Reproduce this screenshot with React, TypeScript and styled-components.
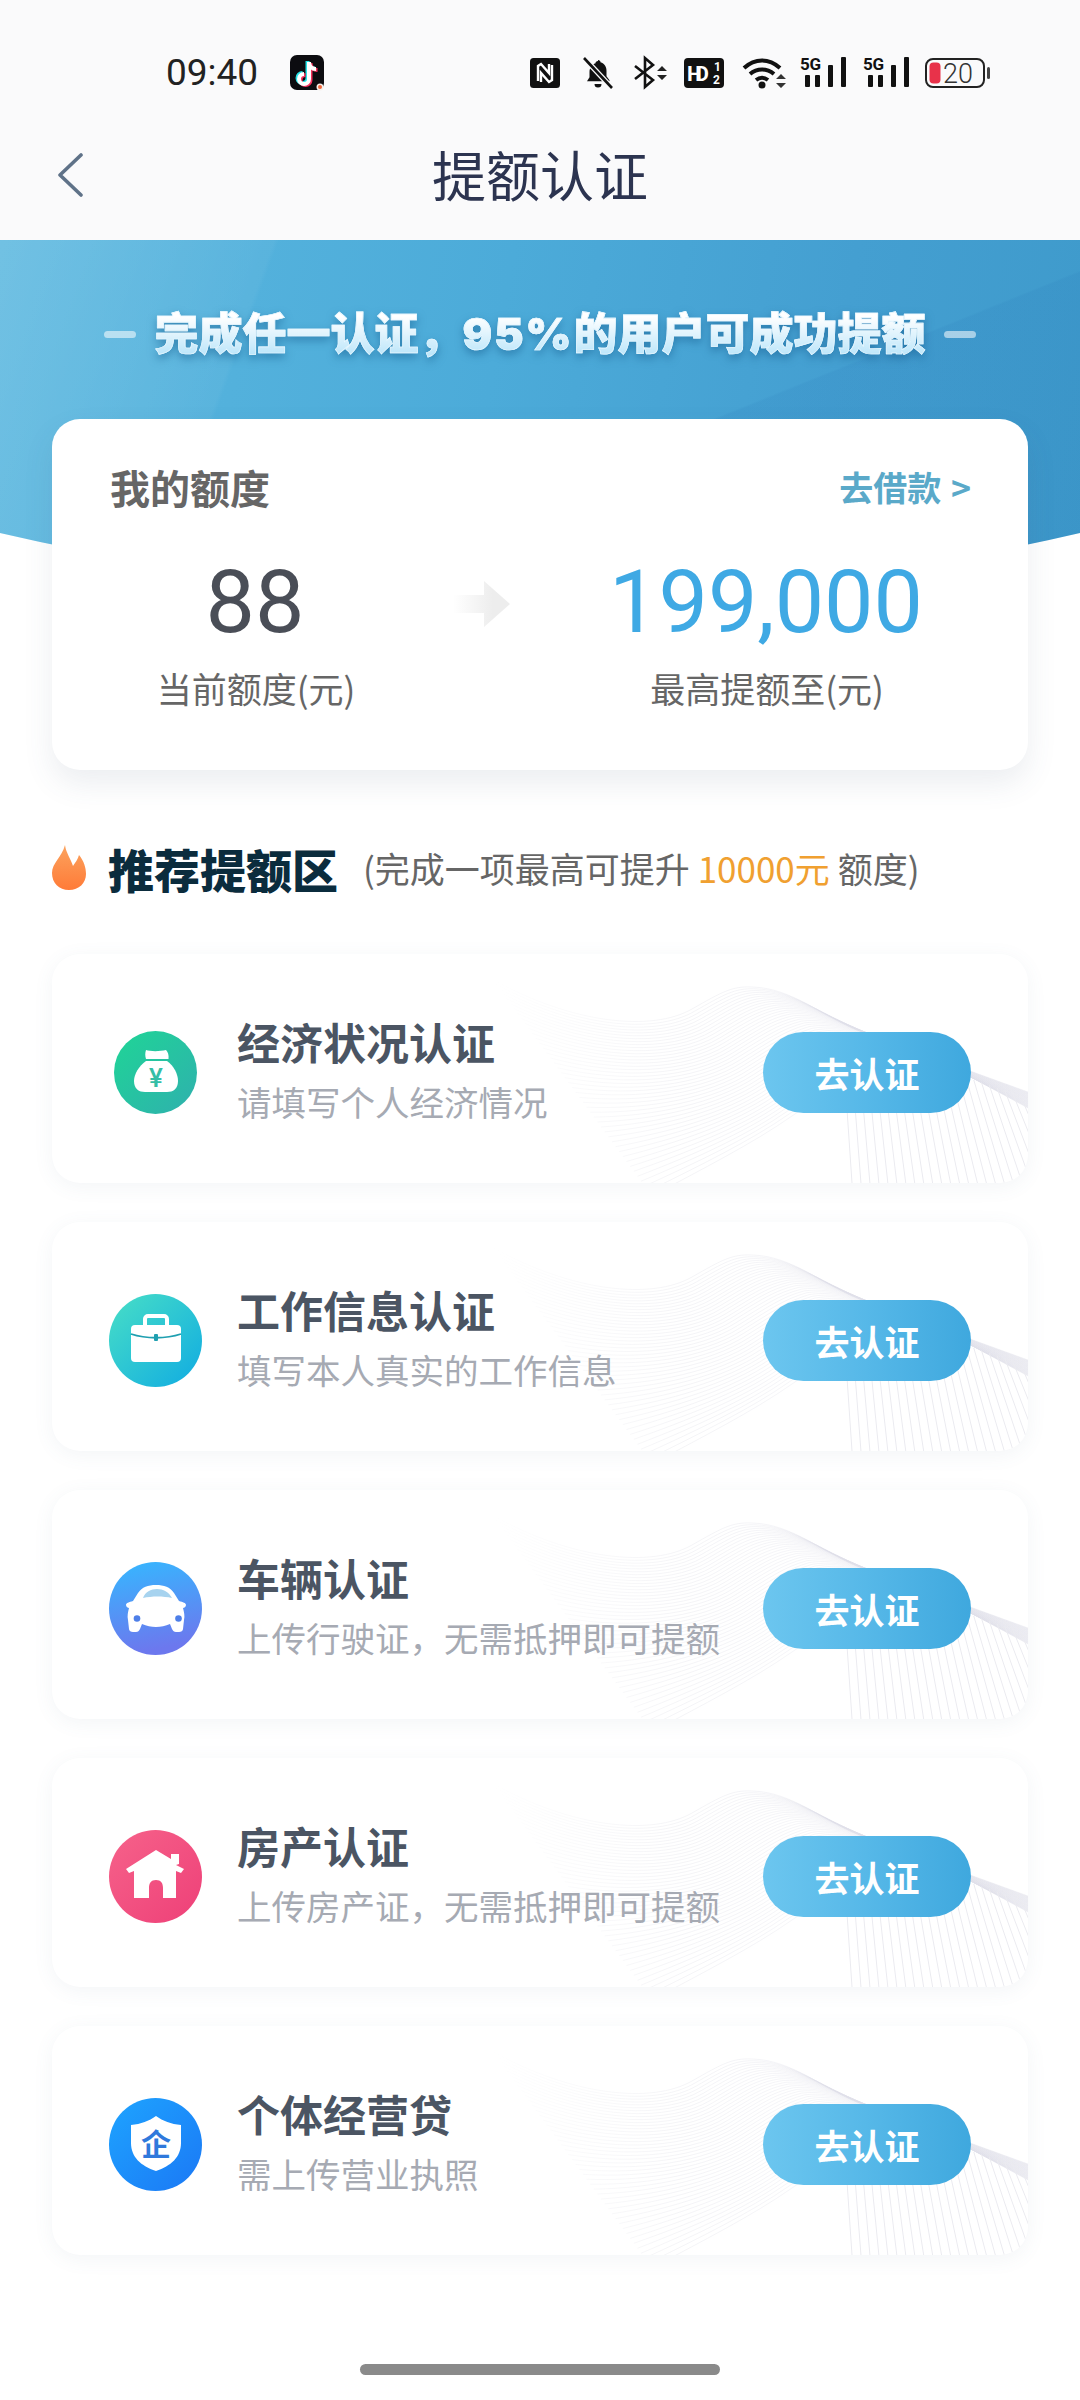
import React from "react";
import styled, { createGlobalStyle } from "styled-components";

const CJK = `"Noto Sans CJK SC", "Noto Sans", sans-serif`;

const Global = createGlobalStyle`
  html, body { margin: 0; padding: 0; background: #fff; }
  body { font-family: ${CJK}; }
  * { box-sizing: border-box; }
`;

const Page = styled.div`
  width: 1080px;
  height: 2400px;
  background: #fff;
  overflow: hidden;
  display: flex;
  flex-direction: column;
`;

const Header = styled.header`
  height: 240px;
  background: #fafafb;
  padding-top: 55px;
`;

const StatusRow = styled.div`
  height: 36px;
  margin-bottom: 19px;
  padding-left: 166px;
  display: flex;
  align-items: center;
`;

const Clock = styled.span`
  font: 400 37px/36px Roboto, sans-serif;
  color: #222;
  width: 124px;
`;

const StatusIcons = styled.div`
  margin-left: 206px;
  display: flex;
  align-items: center;
`;

const Glyph = styled.svg<{ $gap?: number }>`
  display: block;
  flex: none;
  overflow: visible;
  margin-left: ${(p) => p.$gap ?? 0}px;
`;

const NavRow = styled.div`
  height: 130px;
  display: grid;
  grid-template-columns: 1fr auto 1fr;
  align-items: center;
`;

const BackButton = styled.div`
  margin-left: 56px;
  display: flex;
`;

const NavTitle = styled.h1`
  margin: 0 0 3px;
  font: 400 54px/72px ${CJK};
  color: #2c3450;
`;

const Banner = styled.section`
  height: 368px;
  padding-top: 62px;
  display: flex;
  justify-content: center;
  gap: 19px;
  background:
    linear-gradient(110deg, rgba(255, 255, 255, 0.14) 0, rgba(255, 255, 255, 0.04) 22.6%, transparent 23%),
    linear-gradient(158deg, transparent 58%, rgba(20, 90, 165, 0.08) 58.3%, rgba(20, 90, 160, 0.07) 100%),
    linear-gradient(100deg, #5ab7df 0, #4cabd9 45%, #449fd1 75%, #3e9acb 100%);
  clip-path: ellipse(1200px 560px at 50% -207px);
`;

const Dash = styled.i`
  width: 32px;
  height: 7px;
  margin-top: 29px;
  border-radius: 4px;
  background: rgba(255, 255, 255, 0.55);
`;

const Slogan = styled.div`
  height: 58px;
  font: 900 44px/58px ${CJK};
  white-space: nowrap;
  background: linear-gradient(180deg, #ffffff 25%, #bde6fa 90%);
  -webkit-background-clip: text;
  background-clip: text;
  color: transparent;
  -webkit-text-stroke: 0.7px #e6f6fe;
  filter: drop-shadow(0 4px 4px rgba(20, 90, 140, 0.5));
`;

const SloganNumber = styled.span`
  font-family: Inter, sans-serif;
  letter-spacing: 2px;
`;

const QuotaCard = styled.section`
  position: relative;
  z-index: 1;
  margin: -189px 52px 0;
  height: 351px;
  border-radius: 28px;
  background: #fff;
  box-shadow: 0 14px 30px rgba(70, 90, 120, 0.1);
  padding-top: 45px;
`;

const QuotaTop = styled.div`
  display: flex;
  justify-content: space-between;
  align-items: center;
  height: 46px;
  padding: 0 57px 0 58px;
`;

const QuotaTitle = styled.h2`
  margin: 0;
  font: 700 40px/46px ${CJK};
  color: #666;
`;

const BorrowLink = styled.a`
  font: 700 34px/46px ${CJK};
  color: #5aa9c9;
  word-spacing: 2px;
`;

const QuotaGrid = styled.div`
  display: grid;
  grid-template-columns: 406px 46px 524px;
  margin-top: 49px;
`;

const QuotaCell = styled.div`
  display: flex;
  flex-direction: column;
  align-items: center;
`;

const Amount = styled.div<{ $accent?: boolean }>`
  font: 400 88px/86px Roboto, sans-serif;
  color: ${(p) => (p.$accent ? "#3fa9e4" : "#4a4e57")};
`;

const AmountLabel = styled.div`
  margin: 20px 0 0 2px;
  font: 400 35px/46px ${CJK};
  color: #666;
`;

const ArrowMark = styled.svg`
  justify-self: center;
  margin-top: 22px;
`;

const SectionHead = styled.div`
  margin: 72px 0 0 52px;
  height: 52px;
  display: flex;
  align-items: center;
`;

const SectionTitle = styled.h2`
  margin: 0 0 0 22px;
  font: 900 46px/52px ${CJK};
  color: #0b2c3d;
`;

const SectionNote = styled.p`
  margin: 0 0 0 25px;
  font: 400 35px/46px ${CJK};
  color: #666;
  white-space: pre;
`;

const Highlight = styled.span`
  color: #f0a030;
`;

const List = styled.div`
  margin: 60px 52px 0;
  display: flex;
  flex-direction: column;
  gap: 39px;
`;

const ItemCard = styled.article`
  position: relative;
  height: 229px;
  border-radius: 28px;
  background: #fff;
  box-shadow: 0 4px 20px rgba(90, 110, 140, 0.07);
  overflow: hidden;
  padding: 8px 57px 0;
  display: flex;
  align-items: center;
`;

const WaveLayer = styled.svg`
  position: absolute;
  left: 0;
  top: 0;
`;

const IconSlot = styled.div`
  position: relative;
  width: 93px;
  flex: none;
  display: flex;
  justify-content: center;
`;

const ItemText = styled.div`
  position: relative;
  margin: 0 0 3px 35px;
  flex: 1;
`;

const ItemTitle = styled.h3`
  margin: 0;
  font: 700 43px/56px ${CJK};
  color: #4b5563;
`;

const ItemSub = styled.p`
  margin: 4px 0 0;
  font: 400 34.5px/56px ${CJK};
  color: #a6aab3;
`;

const ActionButton = styled.button`
  position: relative;
  width: 208px;
  height: 81px;
  border: 0;
  border-radius: 41px;
  background: linear-gradient(90deg, #6cc6ef 0, #56b8e8 50%, #3fa8de 100%);
  color: #fff;
  font: 700 35px/79px ${CJK};
  padding: 0;
`;

const HomeBar = styled.div`
  width: 360px;
  height: 11px;
  margin: 109px auto 0;
  border-radius: 6px;
  background: #8a8a8a;
`;

/* Line field behind each list card: strands blend from a crest curve to a low curve, then a fan drops below the crest. */
const crest = [440, 25, 520, 70, 600, 78, 640, 55, 670, 38, 680, 32, 700, 33, 740, 34, 770, 62, 805, 76];
const trough = [600, 242, 650, 215, 700, 190, 740, 162, 770, 142, 790, 126, 815, 112, 835, 102, 855, 96, 880, 102];

const buildWave = () => {
  const rising: string[] = [];
  const count = 44;
  for (let i = 0; i <= count; i++) {
    const t = i / count;
    const p = crest.map((v, k) => (v + (trough[k] - v) * t).toFixed(1));
    const tailY = 138 + t * 16;
    rising.push(
      `M${p[0]} ${p[1]}C${p[2]} ${p[3]} ${p[4]} ${p[5]} ${p[6]} ${p[7]}C${p[8]} ${p[9]} ${p[10]} ${p[11]} ${p[12]} ${p[13]}C${p[14]} ${p[15]} ${p[16]} ${p[17]} ${p[18]} ${p[19]}L976 ${tailY.toFixed(1)}`
    );
  }
  const fan: string[] = [];
  for (let i = 0; i <= 24; i++) {
    const t = i / 24;
    fan.push(`M${790 + t * 186} ${82 + t * 62}L${800 + t * 215} 229`);
  }
  return { rising, fan: fan.join("") };
};

const WAVE = buildWave();

const WavePattern = ({ id }: { id: string }) => (
  <WaveLayer width="976" height="229" viewBox="0 0 976 229" fill="none">
    <defs>
      <linearGradient id={id} gradientUnits="userSpaceOnUse" x1="440" y1="0" x2="760" y2="0">
        <stop offset="0" stopColor="#e9e9ee" stopOpacity="0" />
        <stop offset="0.6" stopColor="#e9e9ee" stopOpacity="0.55" />
        <stop offset="1" stopColor="#dedee8" stopOpacity="0.32" />
      </linearGradient>
    </defs>
    {WAVE.rising.map((d) => (
      <path key={d} d={d} stroke={`url(#${id})`} strokeWidth="0.9" />
    ))}
    <path d={WAVE.fan} stroke="#ebebf0" strokeWidth="1" />
  </WaveLayer>
);

const Shaded = ({ id, from, to, x2 = 1, y2 = 1, size }: { id: string; from: string; to: string; x2?: number; y2?: number; size: number }) => (
  <>
    <defs>
      <linearGradient id={id} x1="0" y1="0" x2={x2} y2={y2}>
        <stop offset="0" stopColor={from} />
        <stop offset="1" stopColor={to} />
      </linearGradient>
    </defs>
    <circle cx={size / 2} cy={size / 2} r={size / 2} fill={`url(#${id})`} />
  </>
);

const MoneyBagIcon = () => (
  <svg width="83" height="83" viewBox="0 0 83 83">
    <Shaded id="bag-bg" from="#1fd596" to="#2fb0ae" size={83} />
    <path d="M32 19c4 1.500 14 1.500 20 0 2 2 3 5 2.500 9h-22.500c-1-3-1-6 0-9z" fill="#fff" />
    <path d="M32 30h21c7 5 11 13 11 20 0 8-5 11-11 11h-22c-6 0-11-3-11-11 0-7 5-15 12-20z" fill="#fff" />
    <text x="42" y="56" textAnchor="middle" fontFamily="Roboto, sans-serif" fontSize="26" fontWeight="500" fill="#35bea6">¥</text>
  </svg>
);

const BriefcaseIcon = () => (
  <svg width="93" height="93" viewBox="0 0 93 93">
    <Shaded id="case-bg" from="#48dfc6" to="#10abe2" size={93} />
    <path d="M36 31v-6a3 3 0 0 1 3-3h16a3 3 0 0 1 3 3v6" fill="none" stroke="#fff" strokeWidth="4" />
    <rect x="22" y="31" width="50" height="37" rx="4" fill="#fff" />
    <path d="M22 40c15 5 35 5 50 0" fill="none" stroke="#1f9fb0" strokeWidth="1.800" />
    <rect x="45" y="40" width="4" height="7" rx="1" fill="#1f9fb0" />
  </svg>
);

const CarIcon = () => (
  <svg width="93" height="93" viewBox="0 0 93 93">
    <Shaded id="car-bg" from="#35b8ff" to="#6c78ee" x2={0.2} size={93} />
    <path d="M29 31c4-6 10-8 18-8s14 2 18 8l5 8c4 1 7 2 7 4s-2 3-3 3c1 4 2 8 1 12l-1 9c0 2-2 3-4 3h-3c-2 0-3-1-4-3l-2-5c-9 4-19 4-28 0l-2 5c-1 2-2 3-4 3h-3c-2 0-4-1-4-3l-1-9c-1-4 0-8 1-12-1 0-3-1-3-3s3-3 7-4z" fill="#fff" />
    <path d="M34 36c2-6 8-9 14-9s12 3 15 9c-9-2-20-2-29 0z" fill="#a7d3ef" />
    <circle cx="28" cy="56.500" r="3.300" fill="#4e7fe8" />
    <circle cx="69.500" cy="56.500" r="3.300" fill="#4e7fe8" />
  </svg>
);

const HouseIcon = () => (
  <svg width="93" height="93" viewBox="0 0 93 93">
    <Shaded id="house-bg" from="#f6628a" to="#ee4078" size={93} />
    <path d="M47 20l15 9v-5h8v10l-3 1 8 4-3 4-5-2v27h-13v-10c0-5-2-8-7-8s-7 3-7 8v10h-15v-27l-5 2-3-4z" fill="#fff" />
  </svg>
);

const ShieldIcon = () => (
  <svg width="93" height="93" viewBox="0 0 93 93">
    <Shaded id="shield-bg" from="#1ea4ff" to="#1b78f5" size={93} />
    <path d="M47 18c7 5 15 8 25 9v18c0 14-10 23-25 28-15-5-25-14-25-28v-18c10-1 18-4 25-9z" fill="#fff" />
    <text x="47" y="57" textAnchor="middle" fontFamily={CJK} fontSize="30" fontWeight="700" fill="#2f79dc">企</text>
  </svg>
);

const FlameIcon = () => (
  <Glyph width="34" height="46" viewBox="0 0 34 46">
    <defs>
      <linearGradient id="flame-fill" x1="0" y1="0" x2="0" y2="1">
        <stop offset="0" stopColor="#fba35e" />
        <stop offset="1" stopColor="#ff7b38" />
      </linearGradient>
    </defs>
    <path d="M13 0c1 8 6 14 8 21 2-3 5-7 6-11 5 6 7 13 7 19 0 9-7 16-17 16s-17-7-17-17c0-10 10-16 13-28z" fill="url(#flame-fill)" />
  </Glyph>
);

const TikTokIcon = () => {
  const note = "M19 7v17a5 5 0 1 1-5-5M19 7c0 4 3 7 7 7";
  return (
    <Glyph width="34" height="36" viewBox="0 0 34 36">
      <rect x="0" y="0" width="34" height="35" rx="7" fill="#0c0c10" />
      <g fill="none" strokeWidth="4">
        <path d={note} stroke="#25e2e6" transform="translate(-1.500 -1)" />
        <path d={note} stroke="#f5305c" transform="translate(1.500 1)" />
        <path d={note} stroke="#fff" />
      </g>
      <circle cx="30" cy="32" r="3.500" fill="#f4f1ec" />
      <circle cx="30" cy="32" r="2" fill="#f0653a" />
    </Glyph>
  );
};

const NfcIcon = () => (
  <Glyph width="30" height="30" viewBox="0 0 30 30">
    <rect width="30" height="30" rx="3.500" fill="#111" />
    <path d="M8 23v-15l3-2 8 9v-9M22 7v15l-3 2-8-9v9" fill="none" stroke="#fff" strokeWidth="2.400" />
  </Glyph>
);

const BellOffIcon = () => (
  <Glyph $gap={22} width="32" height="32" viewBox="0 0 32 32">
    <path d="M16 3c1.500 0 2.500 1 2.500 2.200 4 1.200 6 4.500 6 9v5l3 4v1h-22.500l2.500-4v-5c0-4.500 2.500-7.800 6-9 0-1.200 1-2.200 2.500-2.200zM12.500 27h7a3.500 3.500 0 0 1-7 0z" fill="#111" />
    <path d="M3 2l26 28" stroke="#fafafb" strokeWidth="5.500" />
    <path d="M2 1l28 30" stroke="#111" strokeWidth="2.600" />
  </Glyph>
);

const BluetoothIcon = () => (
  <Glyph $gap={19} width="34" height="32" viewBox="0 0 34 32">
    <path d="M2 9l18 14-8 7v-29l8 7-18 14" fill="none" stroke="#111" strokeWidth="2.600" />
    <path d="M29 9l5 5h-10zM29 23l5-5h-10z" fill="#222" />
  </Glyph>
);

const HdIcon = () => (
  <Glyph $gap={17} width="40" height="30" viewBox="0 0 40 30">
    <rect width="40" height="30" rx="4" fill="#111" />
    <text x="3" y="23" fontFamily="Roboto, sans-serif" fontWeight="700" fontSize="21" fill="#fff" textLength="22">HD</text>
    <text x="30" y="13" fontFamily="Roboto, sans-serif" fontWeight="700" fontSize="12" fill="#fff">1</text>
    <text x="29" y="26" fontFamily="Roboto, sans-serif" fontWeight="700" fontSize="12" fill="#fff">2</text>
  </Glyph>
);

const WifiIcon = () => (
  <Glyph $gap={18} width="45" height="32" viewBox="0 0 45 32">
    <g fill="none" stroke="#111" strokeWidth="4">
      <path d="M2 11c11-10 25-10 36 0" />
      <path d="M8 17c7-6 17-6 24 0" />
      <path d="M14 23c4-3 8-3 12 0" />
    </g>
    <circle cx="20" cy="28" r="3.500" fill="#111" />
    <path d="M39 17l5 5h-10zM39 31l5-5h-10z" fill="#333" />
  </Glyph>
);

const SignalIcon = ({ gap }: { gap: number }) => (
  <Glyph $gap={gap} width="46" height="36" viewBox="0 -2 46 36">
    <text x="0" y="13" fontFamily="Roboto, sans-serif" fontWeight="700" fontSize="17" fill="#111" textLength="21">5G</text>
    <rect x="5" y="18" width="5" height="12" rx="1" fill="#111" />
    <rect x="15" y="18" width="5" height="12" rx="1" fill="#111" />
    <rect x="28" y="8" width="5" height="22" rx="1" fill="#111" />
    <rect x="41" y="0" width="5" height="30" rx="1" fill="#111" />
  </Glyph>
);

const BatteryIcon = () => (
  <Glyph $gap={16} width="65" height="32" viewBox="0 0 65 32">
    <rect x="1" y="2" width="58" height="28" rx="7" fill="none" stroke="#222" strokeWidth="2" />
    <rect x="4.500" y="5.500" width="11" height="21" rx="4" fill="#e8324a" />
    <text x="18" y="26" fontFamily="Roboto, sans-serif" fontWeight="300" fontSize="27" fill="#333">20</text>
    <rect x="62" y="10" width="3" height="12" rx="1.500" fill="#444" />
  </Glyph>
);

const BackChevron = () => (
  <svg width="28" height="44" viewBox="0 0 28 44" fill="none">
    <path d="M25 2L4 22l21 20" stroke="#5f7288" strokeWidth="3.600" strokeLinecap="round" strokeLinejoin="round" />
  </svg>
);

const ArrowHint = () => (
  <ArrowMark width="57" height="46" viewBox="0 0 57 46">
    <defs>
      <linearGradient id="arrow-fade" x1="0" y1="0" x2="1" y2="0">
        <stop offset="0" stopColor="#ededed" stopOpacity="0" />
        <stop offset="0.7" stopColor="#ededed" />
      </linearGradient>
    </defs>
    <path d="M0 14h31V0l26 23-26 23V32H0z" fill="url(#arrow-fade)" />
  </ArrowMark>
);

const items = [
  { title: "经济状况认证", sub: "请填写个人经济情况", icon: <MoneyBagIcon /> },
  { title: "工作信息认证", sub: "填写本人真实的工作信息", icon: <BriefcaseIcon /> },
  { title: "车辆认证", sub: "上传行驶证，无需抵押即可提额", icon: <CarIcon /> },
  { title: "房产认证", sub: "上传房产证，无需抵押即可提额", icon: <HouseIcon /> },
  { title: "个体经营贷", sub: "需上传营业执照", icon: <ShieldIcon /> },
];

export default function App() {
  return (
    <>
      <Global />
      <Page>
        <Header>
          <StatusRow>
            <Clock>09:40</Clock>
            <TikTokIcon />
            <StatusIcons>
              <NfcIcon />
              <BellOffIcon />
              <BluetoothIcon />
              <HdIcon />
              <WifiIcon />
              <SignalIcon gap={13} />
              <SignalIcon gap={17} />
              <BatteryIcon />
            </StatusIcons>
          </StatusRow>
          <NavRow>
            <BackButton>
              <BackChevron />
            </BackButton>
            <NavTitle>提额认证</NavTitle>
          </NavRow>
        </Header>

        <Banner>
          <Dash />
          <Slogan>
            完成任一认证，<SloganNumber>95%</SloganNumber>的用户可成功提额
          </Slogan>
          <Dash />
        </Banner>

        <QuotaCard>
          <QuotaTop>
            <QuotaTitle>我的额度</QuotaTitle>
            <BorrowLink>去借款 &gt;</BorrowLink>
          </QuotaTop>
          <QuotaGrid>
            <QuotaCell>
              <Amount>88</Amount>
              <AmountLabel>当前额度(元)</AmountLabel>
            </QuotaCell>
            <ArrowHint />
            <QuotaCell>
              <Amount $accent>199,000</Amount>
              <AmountLabel>最高提额至(元)</AmountLabel>
            </QuotaCell>
          </QuotaGrid>
        </QuotaCard>

        <SectionHead>
          <FlameIcon />
          <SectionTitle>推荐提额区</SectionTitle>
          <SectionNote>
            (完成一项最高可提升 <Highlight>10000元</Highlight> 额度)
          </SectionNote>
        </SectionHead>

        <List>
          {items.map((item, i) => (
            <ItemCard key={item.title}>
              <WavePattern id={`wave-fade-${i}`} />
              <IconSlot>{item.icon}</IconSlot>
              <ItemText>
                <ItemTitle>{item.title}</ItemTitle>
                <ItemSub>{item.sub}</ItemSub>
              </ItemText>
              <ActionButton>去认证</ActionButton>
            </ItemCard>
          ))}
        </List>

        <HomeBar />
      </Page>
    </>
  );
}
